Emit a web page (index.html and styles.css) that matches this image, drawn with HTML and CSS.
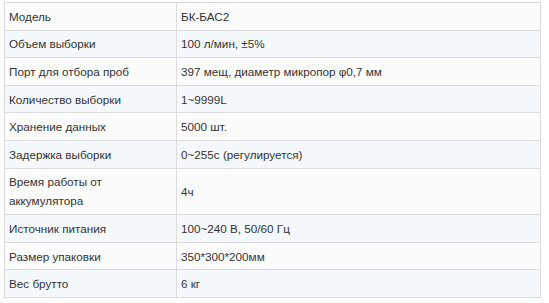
FILE: index.html
```html
<!DOCTYPE html>
<html lang="ru">
<head>
<meta charset="utf-8">
<link rel="stylesheet" href="styles.css">
</head>
<body>
<table class="spec">
  <tbody>
    <tr><td class="k">Модель</td><td>БК-БАС2</td></tr>
    <tr><td class="k">Объем выборки</td><td>100 л/мин, ±5%</td></tr>
    <tr><td class="k">Порт для отбора проб</td><td>397 мещ, диаметр микропор φ0,7 мм</td></tr>
    <tr><td class="k">Количество выборки</td><td>1~9999L</td></tr>
    <tr><td class="k">Хранение данных</td><td>5000 шт.</td></tr>
    <tr><td class="k">Задержка выборки</td><td>0~255с (регулируется)</td></tr>
    <tr><td class="k">Время работы от аккумулятора</td><td>4ч</td></tr>
    <tr><td class="k">Источник питания</td><td>100~240 В, 50/60 Гц</td></tr>
    <tr><td class="k">Размер упаковки</td><td>350*300*200мм</td></tr>
    <tr><td class="k">Вес брутто</td><td>6 кг</td></tr>
  </tbody>
</table>
</body>
</html>
```
FILE: styles.css
```css
html, body {
  margin: 0;
  padding: 0;
  background: #ffffff;
}
body {
  padding: 2px 0 0 4px;
  font-family: "Liberation Sans", Arial, sans-serif;
  font-size: 11.7px;
  color: #333333;
}
.spec {
  width: 537px;
  border-collapse: collapse;
  table-layout: fixed;
}
.spec td {
  border: 1px solid #dcdcdc;
  padding: 3.8px 4px;
  line-height: 19px;
  vertical-align: middle;
}
.spec td.k {
  width: 163px;
}
.spec tr:nth-child(odd) td {
  background: #fcfcfc;
}
.spec tr:nth-child(even) td {
  background: #f5f9fe;
}
```
